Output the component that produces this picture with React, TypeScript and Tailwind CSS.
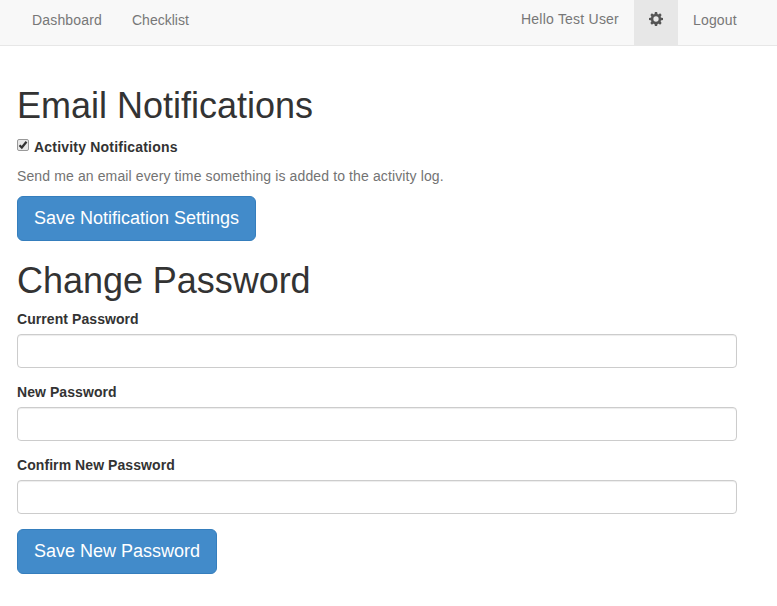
function Gear() {
  return (
    <svg width="14" height="14" viewBox="-7 -7 14 14" className="mr-px block">
      <circle r="3.900" fill="none" stroke="#555" strokeWidth="2.500" />
      <g fill="#555">
        <path d="M-1.600-4.500L-1.100-7H1.100L1.600-4.500zM-1.600 4.500L-1.100 7H1.100L1.600 4.500zM-4.500-1.600L-7-1.100V1.100L-4.500 1.600zM4.500-1.600L7-1.100V1.100L4.500 1.600z" />
        <path transform="rotate(45)" d="M-1.500-4.500L-1.100-6.900H1.100L1.500-4.500zM-1.500 4.500L-1.100 6.900H1.100L1.500 4.500zM-4.500-1.500L-6.900-1.100V1.100L-4.500 1.500zM4.500-1.500L6.900-1.100V1.100L4.500 1.500z" />
      </g>
    </svg>
  );
}

function Field({ label }: { label: string }) {
  return (
    <div className="flex flex-col">
      <label className="mb-[5px] h-5 font-bold tracking-[0.07px]">{label}</label>
      <input
        type="password"
        aria-label={label}
        className="h-[34px] w-full rounded-[4px] border border-[#ccc] bg-white px-3 shadow-[inset_0_1px_1px_rgba(0,0,0,0.075)] outline-none"
      />
    </div>
  );
}

function SaveButton({ children }: { children: string }) {
  return (
    <button className="block h-[45px] rounded-[6px] border border-[#357ebd] bg-[#428bca] px-4 pb-px text-[18px] leading-6 text-white">
      {children}
    </button>
  );
}

export default function App() {
  return (
    <div className="h-[606px] overflow-hidden bg-white font-['Liberation_Sans',Arial,sans-serif] text-[14px] leading-5 text-[#333]">
      <nav className="flex h-[46px] items-start border-b border-[#e7e7e7] bg-[#f8f8f8] pl-[17px] pr-[25px] text-[#777]">
        <a className="w-[100px] px-[15px] pt-[10px] tracking-[0.16px]">Dashboard</a>
        <a className="px-[15px] pt-[10px]">Checklist</a>
        <span className="ml-auto pr-[15px] pt-[9px] tracking-[0.22px]">Hello Test User</span>
        <a className="flex h-[45px] w-11 justify-center bg-[#e7e7e7] pt-3">
          <Gear />
        </a>
        <a className="w-[74px] px-[15px] pt-[10px] tracking-[0.16px]">Logout</a>
      </nav>
      <main className="pl-[17px] pr-10">
        <h1 className="pt-10 text-[36px] leading-[40px]">Email Notifications</h1>
        <div className="mt-[11px] flex h-5">
          <span className="mt-[2px] mr-[5px] flex h-3 w-3 items-center justify-center rounded-[2px] border border-[#999] bg-[#e8e8e8]">
            <svg width="10" height="10" viewBox="0 0 10 10" fill="none" stroke="#333" strokeWidth="2.200">
              <path d="M1.500 5.200L3.800 7.500L8.500 1.700" />
            </svg>
          </span>
          <label className="font-bold tracking-[0.2px]">Activity Notifications</label>
        </div>
        <p className="mt-[9px] mb-[10px] tracking-[0.12px] text-[#737373]">Send me an email every time something is added to the activity log.</p>
        <SaveButton>Save Notification Settings</SaveButton>
        <h1 className="mt-5 mb-2 text-[36px] leading-[40px] tracking-[-0.04px]">Change Password</h1>
        <form className="mb-[15px] flex flex-col gap-[14px]">
          <Field label="Current Password" />
          <Field label="New Password" />
          <Field label="Confirm New Password" />
        </form>
        <SaveButton>Save New Password</SaveButton>
      </main>
    </div>
  );
}
